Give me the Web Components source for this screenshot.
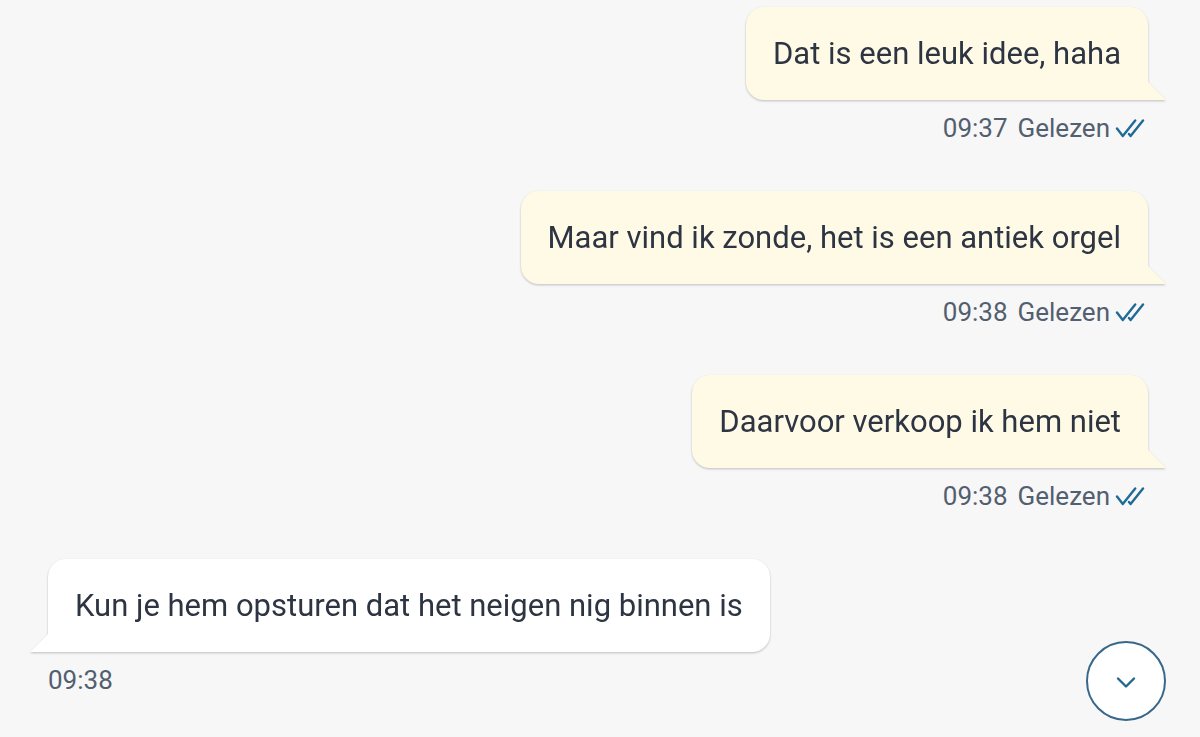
<!DOCTYPE html>
<html lang="nl">
<head>
<meta charset="utf-8">
<meta name="viewport" content="width=device-width, initial-scale=1">
<title>Gesprek</title>
<style>
  html, body { margin: 0; height: 100%; }
  body { background: #f7f7f7; font-family: Roboto, "Liberation Sans", sans-serif; color: #2d3442; }
</style>
</head>
<body>
<chat-thread>
  <chat-message from="me" time="09:37" read>Dat is een leuk idee, haha</chat-message>
  <chat-message from="me" time="09:38" read>Maar vind ik zonde, het is een antiek orgel</chat-message>
  <chat-message from="me" time="09:38" read>Daarvoor verkoop ik hem niet</chat-message>
  <chat-message from="them" time="09:38">Kun je hem opsturen dat het neigen nig binnen is</chat-message>
  <scroll-down slot="action"></scroll-down>
</chat-thread>
<script>
class ChatThread extends HTMLElement {
  constructor() {
    super();
    this.attachShadow({ mode: 'open' }).innerHTML = `
      <style>
        :host { display: block; position: relative; box-sizing: border-box; min-height: 100%; }
        main { display: flex; flex-direction: column; gap: 46px; padding: 7px 52px 0 48px; }
        .action { position: fixed; right: 34px; bottom: 16px; }
      </style>
      <main><slot></slot></main>
      <div class="action"><slot name="action"></slot></div>`;
  }
}

class ReadTicks extends HTMLElement {
  constructor() {
    super();
    this.attachShadow({ mode: 'open' }).innerHTML = `
      <style>
        :host { display: block; width: 30px; height: 20px; }
        svg { display: block; }
      </style>
      <svg width="30" height="20" viewBox="0 0 30 20" fill="none" stroke="#1f6a96" stroke-width="2.4" stroke-linecap="round" stroke-linejoin="round" aria-hidden="true">
        <path d="M2 9.5 7.8 17 20.2 1.5M14 15 15.6 17 28 1.5"/>
      </svg>`;
  }
}

class ChatMessage extends HTMLElement {
  constructor() {
    super();
    this.attachShadow({ mode: 'open' });
  }
  connectedCallback() {
    const read = this.hasAttribute('read');
    this.shadowRoot.innerHTML = `
      <style>
        :host { display: flex; flex-direction: column; align-items: flex-start; gap: 12px; --fill: #fff; }
        :host([from="me"]) { align-items: flex-end; --fill: #fffae6; }
        .bubble {
          position: relative; padding: 28px 27px; border-radius: 18px 18px 18px 0;
          background: var(--fill); font-size: 31px; line-height: 37px;
          filter: drop-shadow(0 1px 1px rgba(0, 0, 0, .16)) drop-shadow(0 1px 1px rgba(0, 0, 0, .08));
        }
        :host([from="me"]) .bubble { border-radius: 18px 18px 0 18px; }
        .bubble::after {
          content: ""; position: absolute; bottom: 0; right: 100%; width: 18px; height: 18px;
          background: var(--fill); clip-path: polygon(100% 0, 100% 100%, 0 100%);
        }
        :host([from="me"]) .bubble::after { right: auto; left: 100%; clip-path: polygon(0 0, 100% 100%, 0 100%); }
        p { margin: 0; }
        .meta { display: flex; align-items: center; font-size: 26px; line-height: 33px; color: #535f70; }
        .status { margin-left: 10px; }
        read-ticks { margin: 0 3px 0 5px; }
      </style>
      <div class="bubble"><p><slot></slot></p></div>
      <div class="meta"><time>${this.getAttribute('time')}</time>${read ? '<span class="status">Gelezen</span><read-ticks></read-ticks>' : ''}</div>`;
  }
}

class ScrollDown extends HTMLElement {
  constructor() {
    super();
    this.attachShadow({ mode: 'open' }).innerHTML = `
      <style>
        :host { display: block; }
        button {
          display: flex; align-items: center; justify-content: center; box-sizing: border-box;
          width: 80px; height: 80px; padding: 0; border: 2px solid #39678a; border-radius: 50%;
          background: #fff; cursor: pointer;
        }
        svg { display: block; }
      </style>
      <button type="button" aria-label="Naar beneden">
        <svg width="24" height="24" viewBox="0 0 24 24" fill="none" stroke="#24668f" stroke-width="2.4" stroke-linecap="round" stroke-linejoin="round">
          <path d="M4 9.5 12 17.5 20 9.5"/>
        </svg>
      </button>`;
  }
}

customElements.define('read-ticks', ReadTicks);
customElements.define('scroll-down', ScrollDown);
customElements.define('chat-message', ChatMessage);
customElements.define('chat-thread', ChatThread);
</script>
</body>
</html>
